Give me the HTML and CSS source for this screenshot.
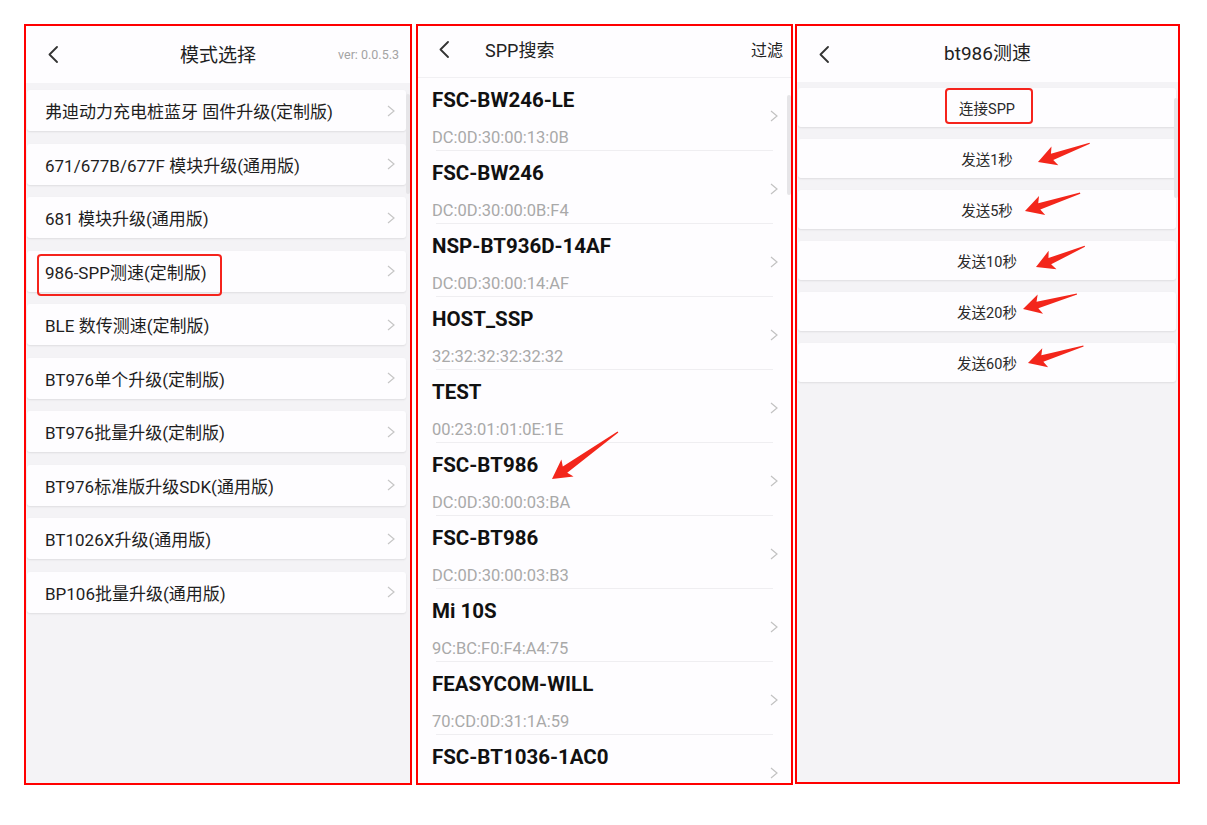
FILE: index.html
```html
<!DOCTYPE html>
<html lang="zh-CN">
<head>
<meta charset="utf-8">
<title>Screens</title>
<link rel="stylesheet" href="styles.css">
</head>
<body>
<div class="wrap">

  <!-- Panel 1 -->
  <section class="panel p1">
    <header class="bar bar-grid h57">
      <span class="back"><svg width="10" height="17" viewBox="0 0 10 17"><polyline points="9,1 1.5,8.5 9,16" fill="none" stroke="#333" stroke-width="1.8" stroke-linejoin="round" stroke-linecap="round"/></svg></span>
      <span class="title t19">模式选择</span>
      <span class="ver">ver: 0.0.5.3</span>
    </header>
    <div class="menu">
      <div class="card"><span>弗迪动力充电桩蓝牙 固件升级(定制版)</span><svg class="chev" width="8" height="12" viewBox="0 0 8 12"><polyline points="1,1 7,6 1,11" fill="none" stroke="#c6c6c6" stroke-width="1.2"/></svg></div>
      <div class="card"><span>671/677B/677F 模块升级(通用版)</span><svg class="chev" width="8" height="12" viewBox="0 0 8 12"><polyline points="1,1 7,6 1,11" fill="none" stroke="#c6c6c6" stroke-width="1.2"/></svg></div>
      <div class="card"><span>681 模块升级(通用版)</span><svg class="chev" width="8" height="12" viewBox="0 0 8 12"><polyline points="1,1 7,6 1,11" fill="none" stroke="#c6c6c6" stroke-width="1.2"/></svg></div>
      <div class="card"><span>986-SPP测速(定制版)</span><svg class="chev" width="8" height="12" viewBox="0 0 8 12"><polyline points="1,1 7,6 1,11" fill="none" stroke="#c6c6c6" stroke-width="1.2"/></svg></div>
      <div class="card"><span>BLE 数传测速(定制版)</span><svg class="chev" width="8" height="12" viewBox="0 0 8 12"><polyline points="1,1 7,6 1,11" fill="none" stroke="#c6c6c6" stroke-width="1.2"/></svg></div>
      <div class="card"><span>BT976单个升级(定制版)</span><svg class="chev" width="8" height="12" viewBox="0 0 8 12"><polyline points="1,1 7,6 1,11" fill="none" stroke="#c6c6c6" stroke-width="1.2"/></svg></div>
      <div class="card"><span>BT976批量升级(定制版)</span><svg class="chev" width="8" height="12" viewBox="0 0 8 12"><polyline points="1,1 7,6 1,11" fill="none" stroke="#c6c6c6" stroke-width="1.2"/></svg></div>
      <div class="card"><span>BT976标准版升级SDK(通用版)</span><svg class="chev" width="8" height="12" viewBox="0 0 8 12"><polyline points="1,1 7,6 1,11" fill="none" stroke="#c6c6c6" stroke-width="1.2"/></svg></div>
      <div class="card"><span>BT1026X升级(通用版)</span><svg class="chev" width="8" height="12" viewBox="0 0 8 12"><polyline points="1,1 7,6 1,11" fill="none" stroke="#c6c6c6" stroke-width="1.2"/></svg></div>
      <div class="card"><span>BP106批量升级(通用版)</span><svg class="chev" width="8" height="12" viewBox="0 0 8 12"><polyline points="1,1 7,6 1,11" fill="none" stroke="#c6c6c6" stroke-width="1.2"/></svg></div>
    </div>
    <div class="thumb thumb-p1"></div>
    <div class="mark mark-p1"></div>
  </section>

  <!-- Panel 2 -->
  <section class="panel p2">
    <header class="bar bar-row">
      <span class="back"><svg width="10" height="17" viewBox="0 0 10 17"><polyline points="9,1 1.5,8.5 9,16" fill="none" stroke="#333" stroke-width="1.8" stroke-linejoin="round" stroke-linecap="round"/></svg></span>
      <span class="title t18 grow">SPP搜索</span>
      <span class="filter">过滤</span>
    </header>
    <div class="devices">
      <div class="dev"><div class="dev-text"><div class="name">FSC-BW246-LE</div><div class="addr">DC:0D:30:00:13:0B</div></div><svg class="chev" width="8" height="12" viewBox="0 0 8 12"><polyline points="1,1 7,6 1,11" fill="none" stroke="#c2c2c2" stroke-width="1.2"/></svg></div>
      <div class="dev"><div class="dev-text"><div class="name">FSC-BW246</div><div class="addr">DC:0D:30:00:0B:F4</div></div><svg class="chev" width="8" height="12" viewBox="0 0 8 12"><polyline points="1,1 7,6 1,11" fill="none" stroke="#c2c2c2" stroke-width="1.2"/></svg></div>
      <div class="dev"><div class="dev-text"><div class="name">NSP-BT936D-14AF</div><div class="addr">DC:0D:30:00:14:AF</div></div><svg class="chev" width="8" height="12" viewBox="0 0 8 12"><polyline points="1,1 7,6 1,11" fill="none" stroke="#c2c2c2" stroke-width="1.2"/></svg></div>
      <div class="dev"><div class="dev-text"><div class="name">HOST_SSP</div><div class="addr">32:32:32:32:32:32</div></div><svg class="chev" width="8" height="12" viewBox="0 0 8 12"><polyline points="1,1 7,6 1,11" fill="none" stroke="#c2c2c2" stroke-width="1.2"/></svg></div>
      <div class="dev"><div class="dev-text"><div class="name">TEST</div><div class="addr">00:23:01:01:0E:1E</div></div><svg class="chev" width="8" height="12" viewBox="0 0 8 12"><polyline points="1,1 7,6 1,11" fill="none" stroke="#c2c2c2" stroke-width="1.2"/></svg></div>
      <div class="dev"><div class="dev-text"><div class="name">FSC-BT986</div><div class="addr">DC:0D:30:00:03:BA</div></div><svg class="chev" width="8" height="12" viewBox="0 0 8 12"><polyline points="1,1 7,6 1,11" fill="none" stroke="#c2c2c2" stroke-width="1.2"/></svg></div>
      <div class="dev"><div class="dev-text"><div class="name">FSC-BT986</div><div class="addr">DC:0D:30:00:03:B3</div></div><svg class="chev" width="8" height="12" viewBox="0 0 8 12"><polyline points="1,1 7,6 1,11" fill="none" stroke="#c2c2c2" stroke-width="1.2"/></svg></div>
      <div class="dev"><div class="dev-text"><div class="name">Mi 10S</div><div class="addr">9C:BC:F0:F4:A4:75</div></div><svg class="chev" width="8" height="12" viewBox="0 0 8 12"><polyline points="1,1 7,6 1,11" fill="none" stroke="#c2c2c2" stroke-width="1.2"/></svg></div>
      <div class="dev"><div class="dev-text"><div class="name">FEASYCOM-WILL</div><div class="addr">70:CD:0D:31:1A:59</div></div><svg class="chev" width="8" height="12" viewBox="0 0 8 12"><polyline points="1,1 7,6 1,11" fill="none" stroke="#c2c2c2" stroke-width="1.2"/></svg></div>
      <div class="dev"><div class="dev-text"><div class="name">FSC-BT1036-1AC0</div></div><svg class="chev" width="8" height="12" viewBox="0 0 8 12"><polyline points="1,1 7,6 1,11" fill="none" stroke="#c2c2c2" stroke-width="1.2"/></svg></div>
    </div>
    <div class="thumb thumb-p2"></div>
    <svg class="overlay" viewBox="0 0 373 757" preserveAspectRatio="none">
      <polygon class="arrow" transform="translate(134 453) rotate(-35.5)" points="0,0 19,-10.5 16,-3.8 81,-0.7 81,0.7 16,3.8 19,10.5"/>
    </svg>
  </section>

  <!-- Panel 3 -->
  <section class="panel p3">
    <header class="bar bar-grid h56">
      <span class="back"><svg width="10" height="17" viewBox="0 0 10 17"><polyline points="9,1 1.5,8.5 9,16" fill="none" stroke="#333" stroke-width="1.8" stroke-linejoin="round" stroke-linecap="round"/></svg></span>
      <span class="title t19 up3">bt986测速</span>
      <span></span>
    </header>
    <div class="actions">
      <div class="btn">连接SPP</div>
      <div class="btn">发送1秒</div>
      <div class="btn">发送5秒</div>
      <div class="btn">发送10秒</div>
      <div class="btn">发送20秒</div>
      <div class="btn">发送60秒</div>
    </div>
    <div class="thumb thumb-p3"></div>
    <div class="mark mark-p3"></div>
    <svg class="overlay" viewBox="0 0 381 756" preserveAspectRatio="none">
      <polygon class="arrow" transform="translate(241 136) rotate(-20)" points="0,0 18,-10 15,-3.4 55,-0.6 55,0.6 15,3.4 18,10"/>
      <polygon class="arrow" transform="translate(228 185) rotate(-18)" points="0,0 18,-10 15,-3.4 58,-0.6 58,0.6 15,3.4 18,10"/>
      <polygon class="arrow" transform="translate(239 241) rotate(-23)" points="0,0 18,-10 15,-3.4 53,-0.6 53,0.6 15,3.4 18,10"/>
      <polygon class="arrow" transform="translate(226 283) rotate(-15.5)" points="0,0 18,-10 15,-3.4 56,-0.6 56,0.6 15,3.4 18,10"/>
      <polygon class="arrow" transform="translate(231 337) rotate(-17)" points="0,0 18,-10 15,-3.4 58,-0.6 58,0.6 15,3.4 18,10"/>
    </svg>
  </section>

</div>
</body>
</html>
```

FILE: styles.css
```css
* { box-sizing: border-box; }

html, body {
  margin: 0;
  padding: 0;
  background: #ffffff;
}

body {
  font-family: Roboto, "Noto Sans CJK SC", "Noto Sans", sans-serif;
  color: #222;
}

.wrap {
  display: flex;
  align-items: flex-start;
  padding: 24px 0 0 24px;
}

.panel {
  position: relative;
  display: flex;
  flex-direction: column;
  border: 2px solid #ff0000;
  overflow: hidden;
}

.p1 { width: 388px; height: 761px; margin-right: 4px; background: #f4f3f6; }
.p2 { width: 377px; height: 761px; margin-right: 2px; background: #fefdff; }
.p3 { width: 385px; height: 760px; background: #f4f3f6; }

/* header bars */
.bar {
  background: #fefdff;
  flex: none;
}

.bar-grid {
  display: grid;
  grid-template-columns: 1fr auto 1fr;
  align-items: center;
}

.h57 { height: 57px; }
.h56 { height: 56px; }

.back {
  display: flex;
  align-items: center;
  padding-left: 22px;
}

.bar-grid .back svg { display: block; }

.title {
  color: #222;
  white-space: nowrap;
}

.t19 { font-size: 19px; margin-top: -2px; }
.t18 { font-size: 18px; }
.up3 { margin-top: -5px; }

.ver {
  justify-self: end;
  padding-right: 11px;
  font-size: 12.5px;
  color: #a3a3a3;
}

.bar-row {
  height: 52px;
  display: flex;
  align-items: center;
  border-bottom: 1px solid #f1f0f3;
}

.bar-row .back { padding-left: 21px; margin-top: -4px; }
.bar-row .title { margin-left: 36px; margin-top: -5px; }
.grow { flex: 1; }

.filter {
  font-size: 16px;
  color: #222;
  padding-right: 8px;
  margin-top: -5px;
}

/* panel 1 menu */
.menu {
  display: flex;
  flex-direction: column;
  gap: 12.5px;
  padding: 7px 4px 0 1px;
}

.card {
  height: 41px;
  background: #fefdff;
  border-radius: 3px;
  box-shadow: 0 1px 2px rgba(0, 0, 0, 0.09);
  display: flex;
  align-items: center;
  justify-content: space-between;
  padding: 0 11px 0 18px;
  font-size: 17px;
  color: #1e1e1e;
  white-space: nowrap;
}

.chev { display: block; flex: none; }

/* panel 2 device list */
.devices {
  display: flex;
  flex-direction: column;
}

.dev {
  position: relative;
  flex: none;
  height: 73px;
  display: flex;
  align-items: center;
  justify-content: space-between;
  padding: 0 13px 0 14px;
}

.dev::after {
  content: "";
  position: absolute;
  left: 18px;
  right: 18px;
  bottom: 0;
  height: 1px;
  background: #efeef1;
}

.dev-text {
  align-self: flex-start;
  padding-top: 11px;
}

.name {
  font-size: 20.5px;
  font-weight: 700;
  line-height: 22px;
  color: #111;
}

.addr {
  margin-top: 18px;
  font-size: 16.5px;
  line-height: 18px;
  color: #a9a9a9;
}

.dev .chev { margin-top: 2px; }

/* panel 3 actions */
.actions {
  display: flex;
  flex-direction: column;
  gap: 12.5px;
  padding: 6px 2px 0 1px;
}

.btn {
  height: 38.5px;
  background: #fefdff;
  border-radius: 3px;
  box-shadow: 0 1px 2px rgba(0, 0, 0, 0.09);
  display: flex;
  align-items: center;
  justify-content: center;
  font-size: 14.5px;
  color: #2a2a2a;
}

/* overlays */
.thumb {
  position: absolute;
  width: 4px;
  height: 100px;
  border-radius: 2px;
  background: #e6e5e8;
}

.thumb-p1 { left: 380px; top: 68px; }
.thumb-p2 { left: 369px; top: 69px; }
.thumb-p3 { left: 377px; top: 72px; }

.mark {
  position: absolute;
  border: 2.5px solid #f5231c;
  border-radius: 4px;
}

.mark-p1 { left: 11px; top: 228px; width: 185px; height: 42px; }
.mark-p3 { left: 148px; top: 62px; width: 88px; height: 36px; }

.overlay {
  position: absolute;
  left: 0;
  top: 0;
  width: 100%;
  height: 100%;
  pointer-events: none;
}

.arrow { fill: #f3261b; }
```
